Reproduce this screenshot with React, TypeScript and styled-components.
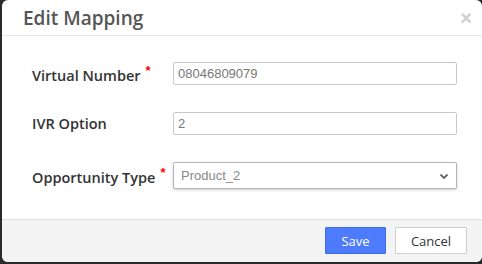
import React, { useState } from 'react';
import styled, { createGlobalStyle } from 'styled-components';

const GlobalStyle = createGlobalStyle`
  html, body {
    margin: 0;
    padding: 0;
    background: #2a2a2a;
    overflow: hidden;
  }
  * {
    box-sizing: border-box;
  }
`;

function App(): JSX.Element {
  const [number, setNumber] = useState('08046809079');
  const [option, setOption] = useState('2');
  const [type, setType] = useState('Product_2');

  return (
    <>
      <GlobalStyle />
      <Backdrop>
        <Modal>
          <Header>
            <Title>Edit Mapping</Title>
            <Close aria-label="close">×</Close>
          </Header>
          <Body>
            <Row>
              <Label>
                Virtual Number<Required>*</Required>
              </Label>
              <Input value={number} onChange={(e) => setNumber(e.target.value)} />
            </Row>
            <Row>
              <Label>IVR Option</Label>
              <Input value={option} onChange={(e) => setOption(e.target.value)} />
            </Row>
            <Row>
              <Label>
                Opportunity Type<Required>*</Required>
              </Label>
              <SelectWrap>
                <Select value={type} onChange={(e) => setType(e.target.value)}>
                  <option>Product_1</option>
                  <option>Product_2</option>
                  <option>Product_3</option>
                </Select>
                <Chevron viewBox="0 0 12 12">
                  <path d="M2.5 4.5 L6 8 L9.5 4.5" fill="none" stroke="#666" strokeWidth="1.8" />
                </Chevron>
              </SelectWrap>
            </Row>
          </Body>
          <Footer>
            <Button primary>Save</Button>
            <Button>Cancel</Button>
          </Footer>
        </Modal>
      </Backdrop>
    </>
  );
}

export default App;

const Backdrop = styled.div`
  width: 482px;
  height: 264px;
  padding: 0 0 0 2px;
`;

const Modal = styled.div`
  width: 480px;
  height: 262px;
  background: #fff;
  border-radius: 6px;
  overflow: hidden;
  display: flex;
  flex-direction: column;
`;

const Header = styled.div`
  height: 36px;
  flex-shrink: 0;
  border-bottom: 1px solid #e5e5e5;
  display: flex;
  align-items: center;
  justify-content: space-between;
  padding: 0 10px 0 21px;
`;

const Title = styled.h4`
  margin: 0;
  font-family: 'Open Sans', sans-serif;
  font-size: 19px;
  font-weight: 600;
  color: #555;
  padding-top: 1px;
`;

const Close = styled.button`
  border: none;
  background: none;
  padding: 0;
  font-family: 'Liberation Sans', Arial, sans-serif;
  font-size: 20px;
  font-weight: 700;
  color: #cfcfcf;
  line-height: 1;
  cursor: pointer;
`;

const Body = styled.div`
  flex: 1;
  padding: 26px 0 0 30px;
  display: flex;
  flex-direction: column;
  gap: 27px;
`;

const Row = styled.div`
  display: flex;
  align-items: center;
`;

const Label = styled.label`
  width: 141px;
  font-family: 'Open Sans', sans-serif;
  font-size: 14.5px;
  font-weight: 600;
  color: #333;
`;

const Required = styled.sup`
  color: #f00;
  font-family: 'Liberation Sans', Arial, sans-serif;
  font-size: 13px;
  margin-left: 5px;
  position: relative;
  top: 0;
`;

const Input = styled.input`
  width: 284px;
  height: 23px;
  border: 1px solid #c8c8c8;
  border-radius: 2px;
  padding: 0 4px;
  font-family: 'Liberation Sans', Arial, sans-serif;
  font-size: 13px;
  color: #777;
  outline: none;
`;

const SelectWrap = styled.div`
  position: relative;
  width: 284px;
  height: 27px;
`;

const Select = styled.select`
  appearance: none;
  width: 100%;
  height: 100%;
  border: 1px solid #b5b5b5;
  border-radius: 2px;
  background: #fff;
  box-shadow: 0 1px 3px rgba(0, 0, 0, 0.2);
  padding: 0 7px;
  font-family: 'Liberation Sans', Arial, sans-serif;
  font-size: 13px;
  color: #888;
  outline: none;
`;

const Chevron = styled.svg`
  position: absolute;
  right: 7px;
  top: 8px;
  width: 12px;
  height: 12px;
  pointer-events: none;
`;

const Footer = styled.div`
  height: 43px;
  flex-shrink: 0;
  border-top: 1px solid #e0e0e0;
  background: #f4f4f4;
  display: flex;
  justify-content: flex-end;
  align-items: flex-start;
  gap: 9px;
  padding: 7px 15px 0 0;
`;

const Button = styled.button<{ primary?: boolean }>`
  height: 27px;
  padding: 0;
  width: ${(p) => (p.primary ? '61px' : '72px')};
  border: 1px solid ${(p) => (p.primary ? '#3d6cf0' : '#cfcfcf')};
  background: ${(p) => (p.primary ? '#4d7bfb' : '#fff')};
  color: ${(p) => (p.primary ? '#fff' : '#333')};
  font-family: 'Open Sans', sans-serif;
  font-size: 13px;
  border-radius: 1px;
  cursor: pointer;
`;
